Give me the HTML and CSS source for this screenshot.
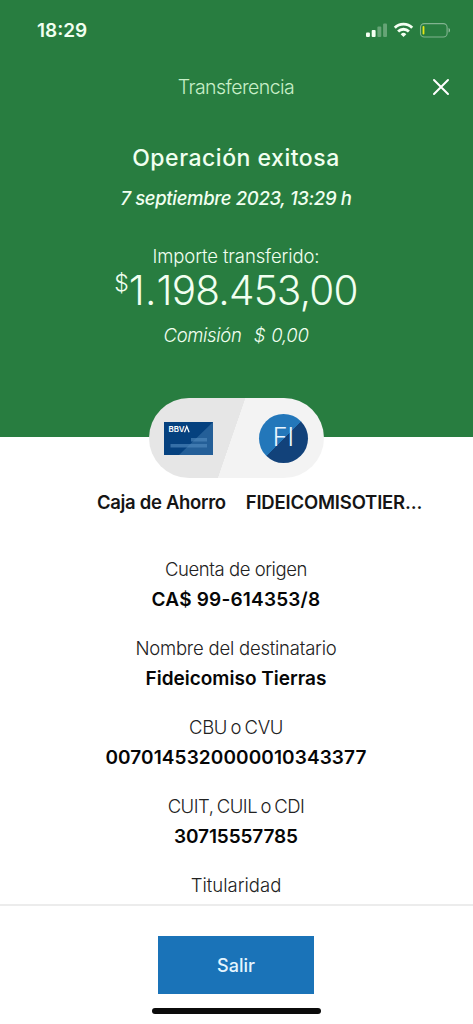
FILE: index.html
```html
<!DOCTYPE html>
<html lang="es">
<head>
<meta charset="utf-8">
<meta name="viewport" content="width=device-width, initial-scale=1">
<title>Transferencia</title>
<link rel="stylesheet" href="styles.css">
</head>
<body>
<div class="screen">
  <header class="hero">
    <div class="status">
      <span class="clock">18:29</span>
      <svg class="indicators" width="86" height="18" viewBox="0 0 86 18">
        <g fill="#f4fff2">
          <rect x="0" y="10.5" width="3.9" height="4.5" rx="1"/>
          <rect x="5.7" y="8" width="3.9" height="7" rx="1"/>
        </g>
        <g fill="#f4fff2" opacity=".3">
          <rect x="11.4" y="4.5" width="3.9" height="10.5" rx="1"/>
          <rect x="17.1" y="1.5" width="3.9" height="13.5" rx="1"/>
        </g>
        <g fill="none" stroke="#f4fff2" stroke-width="2.8">
          <path d="M28.8 5.8a12.2 12.2 0 0 1 17.4 0"/>
          <path d="M32.1 9.5a7.6 7.6 0 0 1 10.8 0"/>
        </g>
        <path d="M37.5 15l-2.8-2.8a4 4 0 0 1 5.6 0z" fill="#f4fff2"/>
        <rect x="54.5" y="1.6" width="26.6" height="13.4" rx="3.8" fill="none" stroke="#fff" stroke-opacity=".42" stroke-width="1.1"/>
        <path d="M82.6 6v4.6c1.9-.7 1.9-3.9 0-4.6z" fill="#fff" fill-opacity=".5"/>
        <rect x="56.6" y="4" width="1.8" height="8.6" rx=".8" fill="#e6e615"/>
      </svg>
    </div>
    <div class="navbar">
      <h1 class="title">Transferencia</h1>
      <svg class="close" width="18" height="18" viewBox="0 0 18 18"><path d="M2 2l14 14M16 2L2 16" fill="none" stroke="#fff" stroke-width="2" stroke-linecap="round"/></svg>
    </div>
    <div class="summary">
      <h2 class="result">Operación exitosa</h2>
      <p class="date">7 septiembre 2023, 13:29 h</p>
      <p class="amount-label">Importe transferido:</p>
      <p class="amount"><span class="currency">$</span><span class="figure"><span class="lead">1.</span>198.453,00</span></p>
      <p class="fee">Comisión&nbsp; $ 0,00</p>
    </div>
  </header>

  <main class="content">
    <div class="parties">
      <svg class="card" width="49" height="33" viewBox="0 0 49 33">
        <path d="M0 0h49v33H0z" fill="#05417f"/>
        <path d="M49 0v33H15z" fill="#245f98"/>
        <path d="M27 16h16v3.5H27zM6.5 22H43v3.5H6.5z" fill="#5089bd" opacity=".65"/>
        <text class="brand" x="4.5" y="10.3">BBV</text>
        <path d="M20.5 10.3l2.3-5.8 2.3 5.8" fill="none" stroke="#fff" stroke-width="1.2"/>
      </svg>
      <span class="avatar">FI</span>
    </div>
    <div class="names">
      <span class="from">Caja de Ahorro</span>
      <span class="to">FIDEICOMISOTIER...</span>
    </div>
    <dl class="details">
      <div class="item"><dt class="l1">Cuenta de origen</dt><dd class="v1">CA$ 99-614353/8</dd></div>
      <div class="item"><dt class="l2">Nombre del destinatario</dt><dd class="v2">Fideicomiso Tierras</dd></div>
      <div class="item"><dt class="l3">CBU o CVU</dt><dd class="v3">0070145320000010343377</dd></div>
      <div class="item"><dt class="l4">CUIT, CUIL o CDI</dt><dd class="v4">30715557785</dd></div>
      <div class="item"><dt class="l5">Titularidad</dt></div>
    </dl>
  </main>

  <footer class="footer">
    <button class="exit" type="button">Salir</button>
    <div class="home"></div>
  </footer>
</div>
</body>
</html>
```
FILE: styles.css
```css
* { box-sizing: border-box; margin: 0; padding: 0; }
body { background: #fff; font-family: Inter, "Liberation Sans", sans-serif; }
.screen {
  width: 473px;
  height: 1024px;
  display: flex;
  flex-direction: column;
  overflow: hidden;
  background: #fff;
}
.hero {
  height: 437px;
  flex: none;
  background: #287d40;
  color: #f1fff0;
  text-align: center;
}
.status {
  height: 60px;
  padding: 2px 21px 0 37px;
  display: flex;
  justify-content: space-between;
  align-items: center;
}
.clock { font-size: 19px; font-weight: 600; line-height: 24px; }
.indicators { display: block; }
.navbar {
  height: 54px;
  padding: 0 23px;
  display: grid;
  grid-template-columns: 18px 1fr 18px;
  align-items: center;
}
.title { grid-column: 2; padding-right: 1px; font-size: 19.5px; font-weight: 300; line-height: 54px; letter-spacing: -.55px; color: #c8efc8; }
.close { display: block; }
.summary { padding-right: 1px; }
.result { padding-top: 29px; font-size: 23px; font-weight: 500; line-height: 30px; letter-spacing: .52px; }
.date { padding-top: 12px; font-size: 18.5px; font-weight: 500; font-style: italic; line-height: 26px; letter-spacing: -.34px; }
.amount-label { padding-top: 33px; font-size: 18.5px; font-weight: 300; line-height: 24px; letter-spacing: -.12px; }
.amount {
  height: 46px;
  display: flex;
  justify-content: center;
  align-items: flex-start;
  font-weight: 300;
  line-height: 46px;
}
.currency { font-size: 23px; line-height: 30px; }
.figure { font-size: 40.5px; font-weight: 300; letter-spacing: -.8px; }
.lead { letter-spacing: .2px; }
.fee { padding-top: 8px; font-size: 18.5px; font-weight: 300; font-style: italic; line-height: 26px; letter-spacing: -.34px; word-spacing: 1.3px; }
.content { flex: 1; min-height: 0; overflow: visible; }
.parties {
  width: 175px;
  height: 80px;
  margin: -39px 0 0 149px;
  padding: 0 16px 0 15px;
  display: flex;
  justify-content: space-between;
  align-items: center;
  border-radius: 40px;
  background: linear-gradient(109deg, #e6e6e6 0 47.5%, #f3f3f3 47.7%);
}
.brand { font-size: 8px; font-weight: 600; fill: #fff; letter-spacing: -.1px; }
.avatar {
  width: 49px;
  height: 49px;
  border-radius: 50%;
  background: linear-gradient(135deg, #2377ba 50%, #12427a 50.5%);
  color: #eaf6ff;
  font-size: 25px;
  font-weight: 300;
  line-height: 46px;
  text-align: center;
}
.names {
  display: flex;
  gap: 20px;
  padding: 11px 0 0 97px;
  font-size: 18.5px;
  font-weight: 600;
  line-height: 26px;
  color: #151515;
  white-space: nowrap;
}
.from { letter-spacing: -.33px; }
.to { letter-spacing: -.18px; }
.details { padding: 40px 1px 0 0; text-align: center; }
.item { height: 79px; }
.item dt { font-size: 18.5px; font-weight: 300; line-height: 28px; color: #222; }
.item dd { padding-top: 1px; font-size: 19px; font-weight: 600; line-height: 32px; color: #060606; }
.item .l1 { letter-spacing: -.44px; }
.item .v1 { letter-spacing: .2px; }
.item .l2 { letter-spacing: -.22px; }
.item .l3 { letter-spacing: -.4px; word-spacing: -1.3px; }
.item .v3 { letter-spacing: .1px; }
.item .l4 { letter-spacing: -.5px; word-spacing: -1.4px; }
.item .v4 { letter-spacing: -.12px; }
.footer {
  height: 120px;
  flex: none;
  padding-top: 30px;
  border-top: 2px solid #ececec;
  background: #fff;
}
.exit {
  display: block;
  width: 156px;
  height: 58px;
  margin: 0 auto 0 158px;
  padding-top: 1px;
  border: 0;
  background: #1a73b8;
  color: #e4f5ff;
  font: 500 18px/57px Inter, sans-serif;
}
.home { width: 169px; height: 6px; margin: 14px 0 0 152px; border-radius: 3px; background: #0b0b0b; }
```
